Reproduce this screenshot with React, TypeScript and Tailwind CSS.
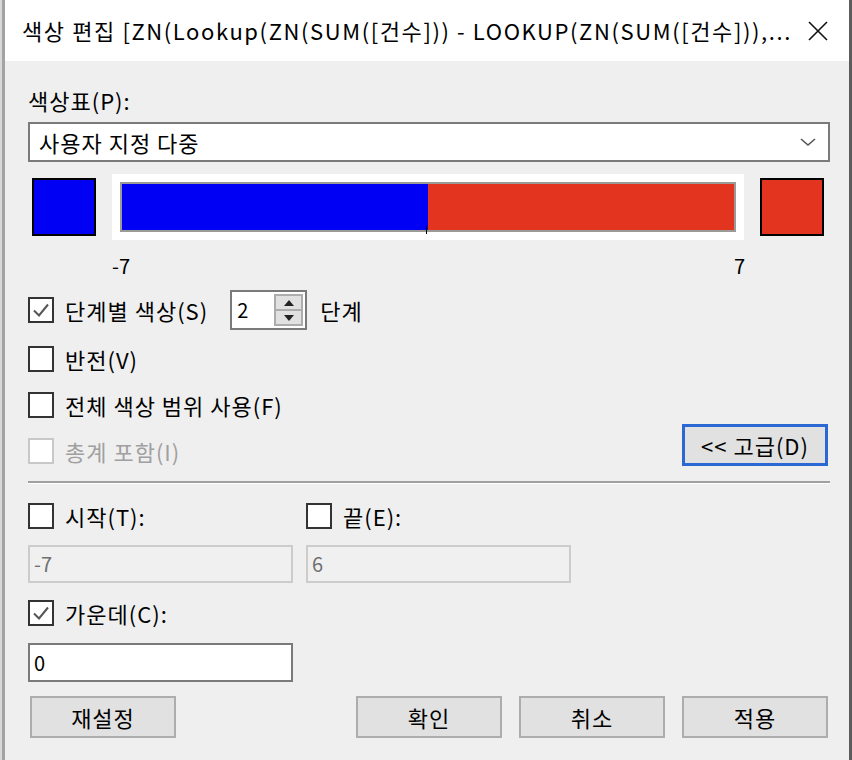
import React from 'react';

const font = { fontFamily: '"Noto Sans CJK KR", "Noto Sans", sans-serif' };

const CheckBox = ({ checked = false, disabled = false }: { checked?: boolean; disabled?: boolean }) => (
  <div
    className={`w-[26px] h-[26px] bg-white border-2 flex items-center justify-center ${
      disabled ? 'border-[#c8c8c8]' : 'border-[#333333]'
    }`}
  >
    {checked && (
      <svg width="20" height="20" viewBox="0 0 20 20">
        <path d="M3 10.5 L8 15.5 L17 4.5" fill="none" stroke="#555" strokeWidth="2" />
      </svg>
    )}
  </div>
);

const CheckRow = ({
  label,
  hotkey,
  suffix = '',
  checked = false,
  disabled = false,
}: {
  label: string;
  hotkey: string;
  suffix?: string;
  checked?: boolean;
  disabled?: boolean;
}) => (
  <div className="flex items-center gap-[11px]">
    <CheckBox checked={checked} disabled={disabled} />
    <span className={`text-[22px] tracking-[1px] leading-none ${disabled ? 'text-[#a0a0a0]' : 'text-black'}`}>
      {label}({hotkey}){suffix}
    </span>
  </div>
);

const DlgButton = ({ children, focused = false }: { children: React.ReactNode; focused?: boolean }) => (
  <div
    className={`w-[146px] h-[42px] bg-[#e1e1e1] flex items-center justify-center text-[22px] tracking-[1px] text-black ${
      focused ? 'border-[3px] border-[#2b68d3]' : 'border-2 border-[#adadad]'
    }`}
  >
    {children}
  </div>
);

export default function App() {
  return (
    <div className="w-[852px] h-[760px] flex bg-[#efefef] overflow-hidden" style={font}>
      {/* left frame */}
      <div className="w-[5px] h-full flex">
        <div className="w-[2px] bg-[#d8d8d8]" />
        <div className="w-[3px] bg-[#a3a3a3]" />
      </div>

      <div className="flex-1 flex flex-col">
        {/* title bar */}
        <div className="h-[61px] bg-white flex items-center pl-[17px] pr-[16px]">
          <span className="text-[22px] tracking-[1.6px] text-black whitespace-nowrap flex-1">
            색상 편집 [ZN(Lookup(ZN(SUM([건수])) - LOOKUP(ZN(SUM([건수])),...
          </span>
          <svg width="22" height="22" viewBox="0 0 22 22" className="mr-[4px]">
            <path d="M2 2 L20 20 M20 2 L2 20" stroke="#111" strokeWidth="1.6" />
          </svg>
        </div>

        {/* body */}
        <div className="flex flex-col pl-[23px] pr-[19px]">
          <div className="mt-[27px] h-[24px] flex items-center text-[22px] tracking-[1px]">색상표(P):</div>

          {/* palette combo */}
          <div className="mt-[10px] h-[40px] bg-white border-2 border-[#7a7a7a] flex items-center pl-[9px] pr-[12px]">
            <span className="flex-1 text-[22px] tracking-[1px]">사용자 지정 다중</span>
            <svg width="16" height="10" viewBox="0 0 16 10">
              <path d="M1 2 L8 8 L15 2" fill="none" stroke="#555" strokeWidth="1.6" />
            </svg>
          </div>

          {/* color ramp */}
          <div className="mt-[12px] h-[66px] flex items-center px-[4px] gap-[16px]">
            <div className="w-[64px] h-[58px] bg-[#0000f5] border-2 border-black" />
            <div className="w-[632px] h-[66px] bg-white p-[8px]">
              <div className="relative h-full border-2 border-[#9c9a96] flex">
                <div className="w-[306px] bg-[#0000f5]" />
                <div className="flex-1 bg-[#e3341f]" />
                <div className="absolute left-[304px] top-[42px] w-[1px] h-[8px] bg-black" />
              </div>
            </div>
            <div className="w-[64px] h-[58px] bg-[#e3341f] border-2 border-black" />
          </div>

          <div className="mt-[16px] h-[20px] flex items-center text-[20px] leading-none pl-[84px]">
            <span className="w-[622px]">-7</span>
            <span>7</span>
          </div>

          {/* stepped color row */}
          <div className="mt-[14px] h-[40px] flex items-center">
            <CheckRow label="단계별 색상" hotkey="S" checked />
            <div className="ml-[22px] w-[77px] h-[40px] bg-white border-2 border-[#7a7a7a] flex items-center pl-[5px] pr-[2px]">
              <span className="flex-1 text-[20px]">2</span>
              <div className="w-[29px] h-[32px] bg-[#e1e1e1] border-2 border-[#adadad] flex flex-col">
                <div className="flex-1 flex items-center justify-center border-b-2 border-[#adadad]">
                  <svg width="10" height="6" viewBox="0 0 10 6">
                    <path d="M5 0 L10 6 L0 6 Z" fill="#222" />
                  </svg>
                </div>
                <div className="flex-1 flex items-center justify-center">
                  <svg width="10" height="6" viewBox="0 0 10 6">
                    <path d="M0 0 L10 0 L5 6 Z" fill="#222" />
                  </svg>
                </div>
              </div>
            </div>
            <span className="ml-[13px] text-[22px] tracking-[1px]">단계</span>
          </div>

          <div className="mt-[6px] h-[46px] flex items-center">
            <CheckRow label="반전" hotkey="V" />
          </div>
          <div className="h-[46px] flex items-center">
            <CheckRow label="전체 색상 범위 사용" hotkey="F" />
          </div>
          <div className="h-[46px] flex items-center justify-between pr-[2px]">
            <CheckRow label="총계 포함" hotkey="I" disabled />
            <div className="self-start -mt-[4px]">
              <DlgButton focused>&lt;&lt; 고급(D)</DlgButton>
            </div>
          </div>

          {/* separator */}
          <div className="mt-[7px] border-t-2 border-[#a0a0a0] border-b border-b-white" />

          {/* start / end */}
          <div className="mt-[17px] h-[30px] flex items-center gap-[13px]">
            <div className="w-[265px]">
              <CheckRow label="시작" hotkey="T" suffix=":" />
            </div>
            <CheckRow label="끝" hotkey="E" suffix=":" />
          </div>
          <div className="mt-[14px] flex gap-[13px]">
            <div className="w-[265px] h-[38px] bg-[#f0f0f0] border-2 border-[#cccccc] flex items-center pl-[4px] text-[20px] text-[#707070]">
              -7
            </div>
            <div className="w-[265px] h-[38px] bg-[#f0f0f0] border-2 border-[#cccccc] flex items-center pl-[4px] text-[20px] text-[#707070]">
              6
            </div>
          </div>

          {/* center */}
          <div className="mt-[15px] h-[30px] flex items-center">
            <CheckRow label="가운데" hotkey="C" suffix=":" checked />
          </div>
          <div className="mt-[15px] w-[265px] h-[39px] bg-white border-2 border-[#7a7a7a] flex items-center pl-[4px] text-[20px]">
            0
          </div>

          {/* buttons */}
          <div className="mt-[14px] flex pl-[2px] pr-[2px]">
            <DlgButton>재설정</DlgButton>
            <div className="flex-1" />
            <div className="flex gap-[17px]">
              <DlgButton>확인</DlgButton>
              <DlgButton>취소</DlgButton>
              <DlgButton>적용</DlgButton>
            </div>
          </div>
        </div>
      </div>

      {/* right frame */}
      <div className="w-[3px] h-full bg-[#5c5c5c]" />
    </div>
  );
}
